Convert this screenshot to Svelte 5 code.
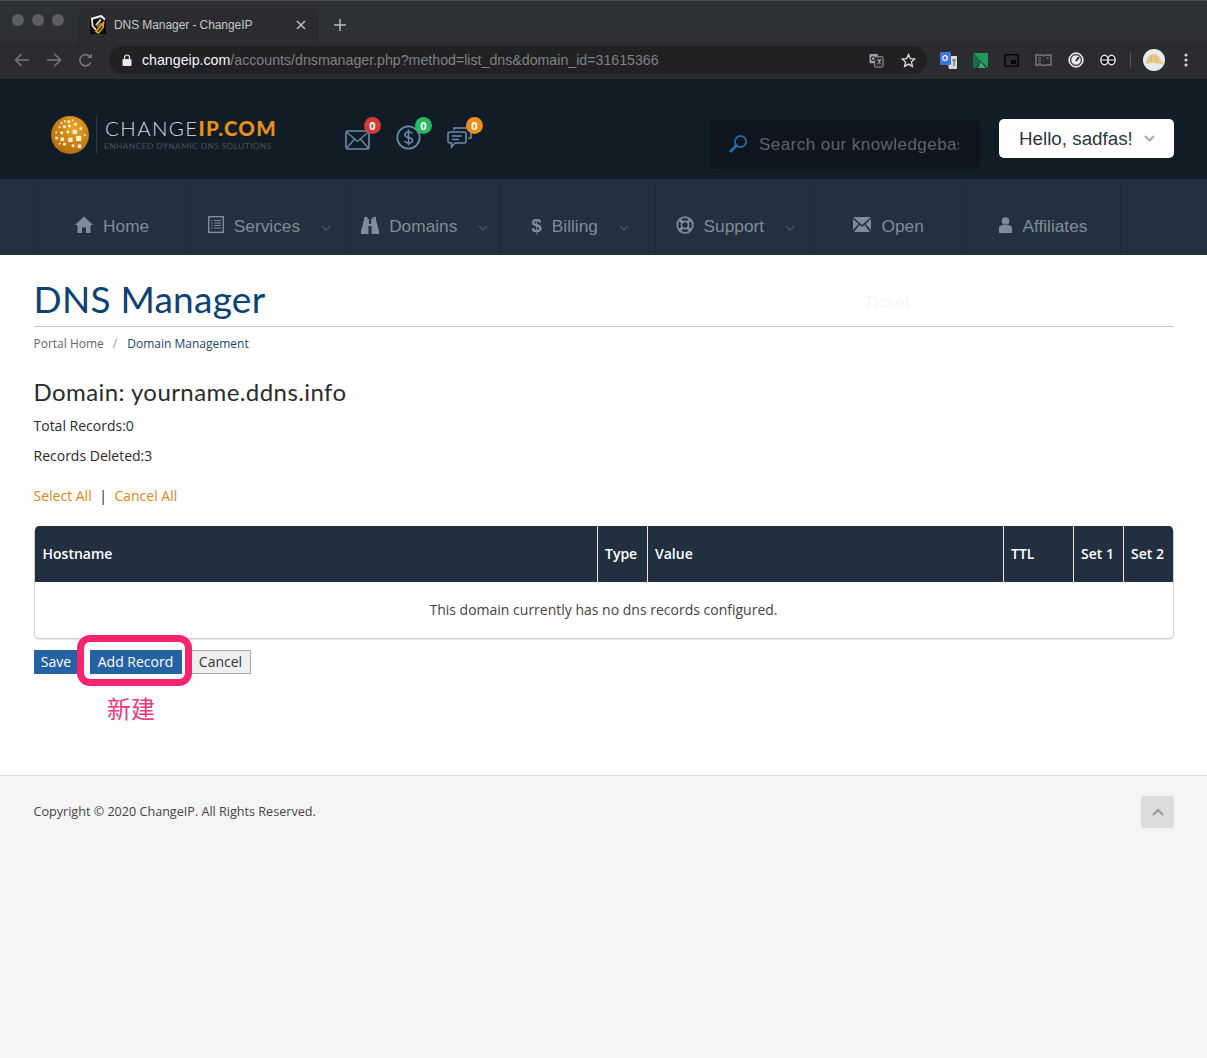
<script>
  const navItems = [
    { label: 'Home', icon: 'home' },
    { label: 'Services', icon: 'list', caret: true },
    { label: 'Domains', icon: 'binoculars', caret: true },
    { label: 'Billing', icon: 'dollar', caret: true },
    { label: 'Support', icon: 'support', caret: true },
    { label: 'Open', icon: 'envelope' },
    { label: 'Affiliates', icon: 'user' }
  ];
  const squares = [[11,7,2],[15,5,2],[19,5,3],[24,4,2],[9,12,2],[14,11,3],[20,10,3],[27,8,3],[5,18,2],[11,18,3],[18,17,3],[25,16,5],[33,13,3],[5,24,3],[11,25,4],[20,25,5],[29,23,6],[38,21,2],[9,31,2],[14,31,3],[24,33,3],[31,33,4]];
</script>

<div class="chrome">
  <div class="tabstrip">
    <div class="lights"><i></i><i></i><i></i></div>
    <div class="tab">
      <svg class="favicon" width="18" height="20" viewBox="0 0 18 20">
        <rect x="1" y="4" width="16" height="15" fill="#0d0c0a"/>
        <path d="M2 4 L12 1 L16 4.5" fill="none" stroke="#f2f2f2" stroke-width="2"/>
        <path d="M3 4 L3.5 11 L7 15 M7 10 L12 4.5" fill="none" stroke="#e6e6e6" stroke-width="1.8"/>
        <path d="M7 16.5 L14.5 7.5 L14 12.5 L9.5 18 Z" fill="none" stroke="#e8a21f" stroke-width="1.7"/>
        <path d="M8 12 L12 8" stroke="#c98a1b" stroke-width="1.5"/>
      </svg>
      <span class="tabtitle">DNS Manager - ChangeIP</span>
      <svg class="tabx" width="10" height="10" viewBox="0 0 10 10"><path d="M1 1 L9 9 M9 1 L1 9" stroke="#c4c7c9" stroke-width="1.4"/></svg>
    </div>
    <svg class="plus" width="12" height="12" viewBox="0 0 12 12"><path d="M6 0 V12 M0 6 H12" stroke="#b6b9bc" stroke-width="1.5"/></svg>
  </div>
  <div class="toolbar">
    <svg class="navbtn" width="16" height="14" viewBox="0 0 16 14"><path d="M15 7 H2 M7.5 1 L1.5 7 L7.5 13" fill="none" stroke="#75797c" stroke-width="1.6"/></svg>
    <svg class="navbtn" width="16" height="14" viewBox="0 0 16 14"><path d="M1 7 H14 M8.5 1 L14.5 7 L8.5 13" fill="none" stroke="#75797c" stroke-width="1.6"/></svg>
    <svg class="navbtn" width="15" height="15" viewBox="0 0 15 15"><path d="M12.6 9.5 A5.6 5.6 0 1 1 11.5 3.3" fill="none" stroke="#75797c" stroke-width="1.6"/><path d="M9 5 H14 V0.5 Z" fill="#75797c"/></svg>
    <div class="omnibox">
      <svg width="10" height="12" viewBox="0 0 10 12"><rect x="0.5" y="5" width="9" height="7" rx="1" fill="#e8eaed"/><path d="M2.5 5 V3.5 a2.5 2.5 0 0 1 5 0 V5" fill="none" stroke="#e8eaed" stroke-width="1.2"/></svg>
      <span class="url"><b>changeip.com</b>/accounts/dnsmanager.php?method=list_dns&amp;domain_id=31615366</span>
      <svg class="translate" width="15" height="15" viewBox="0 0 16 16"><rect x="0.5" y="1" width="9" height="10" rx="1" fill="#9da0a3"/><rect x="6" y="4" width="9" height="11" rx="1" fill="#2a2c2f" stroke="#9da0a3"/><circle cx="4.5" cy="6" r="2" fill="none" stroke="#222" stroke-width="1.1"/><path d="M8.5 7.5 H13 M10.5 7 L12 12 M12.5 7.5 L9 12" stroke="#b4b7ba" stroke-width=".9"/></svg>
      <svg class="star" width="15" height="15" viewBox="0 0 16 16"><path d="M8 1.6 L9.9 6 L14.7 6.4 L11.1 9.6 L12.2 14.3 L8 11.8 L3.8 14.3 L4.9 9.6 L1.3 6.4 L6.1 6 Z" fill="none" stroke="#dcdfe1" stroke-width="1.4"/></svg>
    </div>
    <div class="exts">
      <svg width="17" height="17" viewBox="0 0 17 17"><path d="M6 4 H17 V17 H9 Z" fill="#d5d8dc"/><rect width="11" height="13" rx="1" fill="#3c74de"/><circle cx="5" cy="6" r="2.3" fill="none" stroke="#fff" stroke-width="1.2"/><path d="M12 8 H16 M14 8 V14" stroke="#555" stroke-width="1"/></svg>
      <svg width="15" height="15" viewBox="0 0 15 15"><path d="M0 0 H15 V15 L7.5 8 L0 0Z" fill="#1f9b60"/><path d="M0 1 L7.5 8.5 L3 15 H0Z" fill="#146f4a"/><path d="M7.5 9 L13 15 H5 Z" fill="#2fb072"/></svg>
      <svg width="15" height="13" viewBox="0 0 15 13"><rect x="0.8" y="0.8" width="13.4" height="11.4" rx="1" fill="none" stroke="#060606" stroke-width="1.6"/><rect x="7" y="6" width="5" height="4" fill="#060606"/></svg>
      <svg width="17" height="13" viewBox="0 0 17 13"><path d="M1 1 H7 L8.5 2 L10 1 H16 V11 H10 L8.5 12 L7 11 H1 Z" fill="none" stroke="#787b7e" stroke-width="1.4"/><path d="M3 4 H6 M3 6.5 H6 M3 9 H6 M11 4 H14" stroke="#787b7e"/></svg>
      <svg width="16" height="16" viewBox="0 0 16 16"><circle cx="8" cy="8" r="7.2" fill="#e9e9e9" stroke="#e9e9e9"/><circle cx="8" cy="8" r="5.4" fill="none" stroke="#2c2e31" stroke-width="1.2"/><path d="M8 9 L11 5" stroke="#2c2e31" stroke-width="2"/></svg>
      <svg width="16" height="12" viewBox="0 0 16 12"><ellipse cx="4.5" cy="6" rx="3.6" ry="4.8" fill="#111" stroke="#dfe1e3" stroke-width="1.5"/><ellipse cx="11.5" cy="6" rx="3.6" ry="4.8" fill="#111" stroke="#dfe1e3" stroke-width="1.5"/><path d="M1.5 6 H14.5" stroke="#dfe1e3" stroke-width="1.2"/></svg>
      <span class="sep"></span>
      <svg class="avatar" width="22" height="22" viewBox="0 0 22 22"><circle cx="11" cy="11" r="11" fill="#e7eaee"/><path d="M3 15 C3 8 7 5 11 5 C15 5 17.5 9 18 12 L20.5 15 L15 14.5 C11 13.5 7 14 3 15 Z" fill="#e8c98c"/><path d="M9 6 L8 13.5 M13 6 L14 14" stroke="#c9a766" stroke-width=".7"/></svg>
      <svg class="dots" width="4" height="14" viewBox="0 0 4 14"><circle cx="2" cy="2" r="1.5" fill="#dfe1e3"/><circle cx="2" cy="7" r="1.5" fill="#dfe1e3"/><circle cx="2" cy="12" r="1.5" fill="#dfe1e3"/></svg>
    </div>
  </div>
</div>

<header class="top">
  <div class="logo">
    <svg width="38" height="38" viewBox="0 0 44 44">
      <defs><radialGradient id="g" cx=".6" cy=".3" r=".8"><stop offset="0" stop-color="#eea321"/><stop offset="1" stop-color="#a9660d"/></radialGradient></defs>
      <circle cx="22" cy="22" r="22" fill="url(#g)"/>
      {#each squares as s}<rect x={s[0]} y={s[1]} width={s[2]} height={s[2]} fill="#fdf0d8"/>{/each}
    </svg>
    <span class="logobar"></span>
    <div class="logotext">
      <div class="brand">CHANGE<b>IP.COM</b></div>
      <div class="tag">ENHANCED DYNAMIC DNS SOLUTIONS</div>
    </div>
  </div>
  <div class="notes">
    <div class="note">
      <svg width="25" height="20" viewBox="0 0 25 20"><rect x="1" y="1" width="23" height="18" rx="2" fill="none" stroke="#6c8cab" stroke-width="1.6"/><path d="M1.5 2 L12.5 11.5 L23.5 2 M1.5 18.5 L9.5 9 M23.5 18.5 L15.5 9" fill="none" stroke="#6c8cab" stroke-width="1.3"/></svg>
      <span class="badge red">0</span>
    </div>
    <div class="note">
      <svg width="25" height="25" viewBox="0 0 25 25"><circle cx="12.5" cy="12.5" r="11.2" fill="none" stroke="#6c8cab" stroke-width="1.7"/><path d="M16.5 8.5 C15.5 6.5 9 6 9 9.7 C9 13.5 16.5 11.5 16.5 15.3 C16.5 19 9.5 18.5 8.5 16 M12.5 4.5 V20.5" fill="none" stroke="#6c8cab" stroke-width="1.5"/></svg>
      <span class="badge green">0</span>
    </div>
    <div class="note">
      <svg width="25" height="24" viewBox="0 0 25 24"><path d="M7 4 V2 H24 V12 H21" fill="none" stroke="#6c8cab" stroke-width="1.6"/><path d="M3 6 H17 a2 2 0 0 1 2 2 V15 a2 2 0 0 1 -2 2 H8 L4.5 21 V17 H3 a2 2 0 0 1 -2 -2 V8 a2 2 0 0 1 2 -2 Z" fill="#121c27" stroke="#6c8cab" stroke-width="1.6"/><path d="M5 10 H15 M5 13.5 H12" stroke="#6c8cab" stroke-width="1.4"/></svg>
      <span class="badge orange">0</span>
    </div>
  </div>
  <div class="search">
    <svg width="20" height="20" viewBox="0 0 20 20"><circle cx="12.5" cy="7.5" r="5.6" fill="none" stroke="#2c6aa8" stroke-width="1.7"/><path d="M8.5 11.5 L2 18" stroke="#2c6aa8" stroke-width="3"/></svg>
    <span class="ph">Search our knowledgebas</span>
  </div>
  <div class="hello">Hello, sadfas!<svg width="11" height="7" viewBox="0 0 11 7"><path d="M1 1 L5.5 5.5 L10 1" fill="none" stroke="#9fb0bb" stroke-width="2.2"/></svg></div>
</header>

<nav class="mainnav">
  {#each navItems as item}
    <div class="navitem" class:hascaret={item.caret}>
      <span class="nicon">
        {#if item.icon === 'home'}
          <svg width="18" height="17" viewBox="0 0 18 17"><path d="M9 0.5 L18 9 H15.5 V17 H11 V11.5 H7 V17 H2.5 V9 H0 Z" fill="#818c99"/></svg>
        {:else if item.icon === 'list'}
          <svg width="16" height="17" viewBox="0 0 16 17"><rect x="0.7" y="0.7" width="14.6" height="15.6" fill="none" stroke="#818c99" stroke-width="1.4"/><path d="M3 4.5 H4.5 M6 4.5 H13 M3 7 H4.5 M6 7 H13 M3 9.5 H4.5 M6 9.5 H13 M3 12 H4.5 M6 12 H13" stroke="#818c99" stroke-width="1.2"/></svg>
        {:else if item.icon === 'binoculars'}
          <svg width="18" height="18" viewBox="0 0 18 18"><path d="M3 1 H6.5 V3 H8 V8 H10 V3 H11.5 V1 H15 V4 L18 15 V18 H10.5 V10 H7.5 V18 H0 V15 L3 4 Z" fill="#818c99"/></svg>
        {:else if item.icon === 'dollar'}
          <span class="dollar">$</span>
        {:else if item.icon === 'support'}
          <svg width="18" height="18" viewBox="0 0 18 18"><circle cx="9" cy="9" r="7.8" fill="none" stroke="#818c99" stroke-width="1.8"/><circle cx="9" cy="9" r="3.6" fill="none" stroke="#818c99" stroke-width="1.6"/><path d="M3.5 3.5 L6.5 6.5 M14.5 3.5 L11.5 6.5 M3.5 14.5 L6.5 11.5 M14.5 14.5 L11.5 11.5" stroke="#818c99" stroke-width="3"/></svg>
        {:else if item.icon === 'envelope'}
          <svg width="18" height="16" viewBox="0 0 18 16"><path d="M0 0 H18 L9 8 Z M0 2 L5.5 7 L0 13 Z M18 2 L12.5 7 L18 13 Z M1 15 L6.5 8 L9 10 L11.5 8 L17 15 Z" fill="#818c99"/></svg>
        {:else}
          <svg width="13" height="16" viewBox="0 0 13 16"><circle cx="6.5" cy="4" r="3.8" fill="#818c99"/><path d="M0 16 V11 C0 9 2 8 4 8 H9 C11 8 13 9 13 11 V16 Z" fill="#818c99"/></svg>
        {/if}
      </span>
      <span class="nlabel">{item.label}</span>
      {#if item.caret}
        <svg class="ncaret" width="10" height="6" viewBox="0 0 10 6"><path d="M1 1 L5 5 L9 1" fill="none" stroke="#45566a" stroke-width="1.4"/></svg>
      {/if}
    </div>
  {/each}
</nav>

<main class="content">
  <span class="ghost">Ticket</span>
  <h1>DNS Manager</h1>
  <div class="crumbs"><span class="c1">Portal Home</span><span class="slash">/</span><span class="c2">Domain Management</span></div>
  <h2>Domain: yourname.ddns.info</h2>
  <p class="stat first">Total Records:0</p>
  <p class="stat">Records Deleted:3</p>
  <p class="sel"><span>Select All</span><em>|</em><span>Cancel All</span></p>
  <div class="tablewrap">
    <table>
      <colgroup><col class="c-host"/><col class="c-type"/><col class="c-val"/><col class="c-ttl"/><col class="c-set"/><col/></colgroup>
      <thead><tr><th>Hostname</th><th>Type</th><th>Value</th><th>TTL</th><th>Set 1</th><th>Set 2</th></tr></thead>
      <tbody><tr><td colspan="6">This domain currently has no dns records configured.</td></tr></tbody>
    </table>
  </div>
  <div class="actions">
    <button class="blue save">Save</button>
    <button class="blue add">Add Record</button>
    <button class="cancel">Cancel</button>
    <span class="highlight"></span>
  </div>
  <div class="annot">新建</div>
</main>

<footer class="foot">
  <span class="copy">Copyright © 2020 ChangeIP. All Rights Reserved.</span>
  <div class="totop"><svg width="12" height="8" viewBox="0 0 12 8"><path d="M1 7 L6 2 L11 7" fill="none" stroke="#999" stroke-width="2.2"/></svg></div>
</footer>

<style>
  :global(html), :global(body) { margin: 0; background: #f5f5f5; }
  :global(#app) { min-height: 1058px; display: flex; flex-direction: column; overflow: hidden; }

  .chrome { height: 79px; background: #2b2d30; font-family: "Liberation Sans", sans-serif; border-top: 1px solid #4a4c4f; box-sizing: border-box; }
  .tabstrip { height: 41px; display: flex; align-items: flex-end; background: #2e3134; }
  .lights { display: flex; gap: 8px; padding: 0 0 16px 12px; width: 65px; box-sizing: border-box; }
  .lights i { width: 12px; height: 12px; border-radius: 50%; background: #5c5e61; }
  .tab { width: 240px; height: 34px; margin-left: 13px; background: #2a2c2f; border-radius: 8px 8px 0 0; display: flex; align-items: center; padding: 0 12px 0 11px; box-sizing: border-box; color: #c4c7c9; font-size: 12px; }
  .favicon { margin-right: 7px; flex: none; }
  .tabtitle { flex: 1; white-space: nowrap; letter-spacing: -.08px; }
  .plus { margin: 0 0 11px 16px; }
  .toolbar { height: 37px; background: #2a2c2f; display: flex; align-items: center; padding: 0 0 1px 14px; box-sizing: border-box; position: relative; }
  .navbtn { margin-right: 16px; flex: none; }
  .omnibox { width: 818px; height: 28px; margin-left: 0; border-radius: 14px; background: #1f2123; display: flex; align-items: center; padding: 0 11px 0 13px; box-sizing: border-box; }
  .url { flex: 1; margin-left: 10px; font-size: 14.2px; color: #7f8285; white-space: nowrap; }
  .url b { font-weight: 400; color: #f4f5f6; }
  .translate { margin-right: 17px; }
  .exts { display: flex; align-items: center; gap: 16px; margin-left: 13px; }
  .sep { width: 1px; height: 16px; background: #55585b; margin: 0 -2px 0 -2px; }
  .avatar { margin-left: -2px; }
  .dots { margin-left: 3px; }

  .top { height: 100px; background: #121c27; display: flex; align-items: center; padding: 0 33px 0 51px; box-sizing: border-box; position: relative; }
  .logo { display: flex; align-items: center; width: 294px; flex: none; margin-top: 11px; }
  .logobar { width: 1px; height: 38px; background: #2c3744; margin: 0 8px 0 7px; }
  .logotext { margin-top: -3px; }
  .brand { font: 300 20.5px/24px "Lato", sans-serif; color: #d8dde3; letter-spacing: 1.4px; }
  .brand b { font-weight: 900; color: #e59020; letter-spacing: 1.2px; }
  .tag { font: 400 8.4px/10px "Lato", sans-serif; color: #46525f; letter-spacing: .4px; margin: 1px 0 0 -1px; }
  .notes { display: flex; gap: 26px; flex: none; width: 365px; align-self: flex-start; padding-top: 46px; box-sizing: border-box; }
  .note { position: relative; width: 25px; height: 25px; display: flex; align-items: flex-end; }
  .badge { position: absolute; left: 19px; top: -8px; width: 17px; height: 17px; border-radius: 50%; color: #fff; font: 700 11px/17px "Open Sans", sans-serif; text-align: center; }
  .red { background: #d33b35; }
  .green { background: #27b860; }
  .orange { background: #f18d15; }
  .search { width: 270px; height: 49px; margin-top: 30px; background: #0e151e; border-radius: 6px; display: flex; align-items: center; padding: 0 21px 0 18px; box-sizing: border-box; flex: none; }
  .ph { font: 400 17px/22px "Liberation Sans", sans-serif; color: #5c646d; margin: 2px 0 0 11px; letter-spacing: .45px; white-space: nowrap; overflow: hidden; flex: 1; }
  .hello { width: 175px; height: 39px; margin-left: 19px; flex: none; background: #fff; border-radius: 5px; display: flex; align-items: center; padding-left: 20px; box-sizing: border-box; margin-top: 19px; font: 400 18.8px "Liberation Sans", sans-serif; color: #2a3744; white-space: nowrap; }
  .hello svg { margin-left: 11px; }

  .mainnav { height: 76px; background: #22303f; display: flex; padding-left: 34px; box-sizing: border-box; }
  .navitem { width: 155.3px; flex: none; box-sizing: border-box; border-left: 1px solid #1d2a38; display: flex; align-items: center; justify-content: center; padding-top: 19px; color: #818c99; font: 400 17.3px "Liberation Sans", sans-serif; }
  .navitem.hascaret { padding-left: 4px; }
  .navitem:last-child { border-right: 1px solid #1d2a38; }
  .nicon { display: inline-flex; margin-right: 10px; position: relative; top: -2px; }
  .dollar { font: 700 19px/1 "Liberation Sans", sans-serif; top: 1px; position: relative; }
  .ncaret { margin-left: 21px; margin-top: 3px; flex: none; }

  .content { background: #fff; padding: 0 33px 0 33.5px; height: 521px; box-sizing: border-box; position: relative; font-family: "Open Sans", sans-serif; font-size: 14px; color: #333; border-bottom: 1px solid #ddd; }
  .ghost { position: absolute; left: 864px; top: 37px; font: 400 17.3px "Liberation Sans", sans-serif; color: #f5f6f7; }
  h1 { margin: 0; padding-top: 21px; height: 72px; box-sizing: border-box; font: 400 37px/46px "Lato", sans-serif; color: #0d4374; border-bottom: 1px solid #c6c6c6; letter-spacing: .25px; }
  .crumbs { font-size: 12px; line-height: 16px; margin-top: 9px; color: #666; }
  .slash { color: #999; margin: 0 10px 0 9px; }
  .c2 { color: #1b466e; }
  h2 { margin: 25px 0 0; font: 400 24px/30px "Lato", sans-serif; color: #2b2b2b; letter-spacing: .42px; }
  .stat { margin: 10px 0 0; line-height: 20px; height: 20px; color: #2b2b2b; }
  .stat.first { margin-top: 9px; }
  .sel { margin: 20px 0 0; line-height: 20px; color: #e0851c; }
  .sel em { font-style: normal; color: #1a1a1a; margin: 0 7.5px; }
  .tablewrap { margin-top: 20px; border: 1px solid #ccc; border-top: 0; border-radius: 5px; overflow: hidden; width: 1140px; box-sizing: border-box; box-shadow: 0 1px 1px rgba(0,0,0,.1); }
  table { width: 100%; table-layout: fixed; border-collapse: collapse; }
  .c-host { width: 563px; }
  .c-type { width: 50px; }
  .c-val { width: 356px; }
  .c-ttl { width: 70px; }
  .c-set { width: 50px; }
  th { height: 56px; background: #212f3f; color: #fff; text-align: left; padding: 0 0 2px 7px; font-weight: 600; font-size: 14px; border-left: 1px solid #e7e9eb; box-sizing: border-box; }
  th:first-child { border-left: 0; padding-left: 8px; }
  td { height: 56px; text-align: center; color: #444; padding: 0 0 2px; box-sizing: border-box; }
  .actions { display: flex; margin-top: 11px; position: relative; height: 24px; }
  button { height: 24px; padding: 0 0 2px; font: 400 14px "Open Sans", sans-serif; border: 0; border-radius: 0; box-sizing: border-box; }
  .blue { background: #2462a3; color: #fff; }
  .save { width: 45px; }
  .add { width: 92px; margin-left: 11px; }
  .cancel { width: 60px; margin-left: 9px; background: #efefef; color: #333; border: 1px solid #aaa; }
  .highlight { position: absolute; left: 43px; top: -15px; width: 115px; height: 51px; border: 7px solid #f8246e; border-radius: 13px; box-sizing: border-box; pointer-events: none; }
  .annot { margin-top: 19px; margin-left: 73.5px; font: 400 24px/30px "Noto Sans CJK SC", sans-serif; color: #ea3a7e; }

  .foot { flex: 1; background: #f5f5f5; padding: 20px 33px 0 33.5px; display: flex; justify-content: space-between; align-items: flex-start; font: 400 12.6px/32px "Open Sans", sans-serif; color: #444; }
  .totop { width: 33px; height: 32px; background: #dcdcdc; border-radius: 3px; display: flex; align-items: center; justify-content: center; }
</style>
